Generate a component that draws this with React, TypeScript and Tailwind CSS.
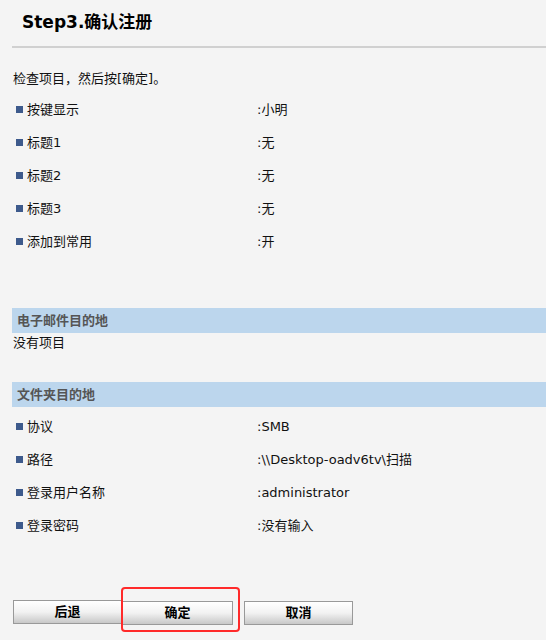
import React from "react";

const font = { fontFamily: '"DejaVu Sans", Verdana, "Noto Sans CJK SC", sans-serif' };

function Row({ label, value }: { label: string; value: string }) {
  return (
    <div className="flex h-[33px] items-center text-[13px] text-[#111]">
      <div className="flex w-[245px] items-center pl-[4px]">
        <span className="mr-[4px] inline-block h-[7px] w-[7px] bg-[#3d5a8c]" />
        <span>{label}</span>
      </div>
      <div>:{value}</div>
    </div>
  );
}

function Band({ title }: { title: string }) {
  return (
    <div className="flex h-[25px] items-center bg-[#bcd6ed] pl-[5px] text-[13px] font-bold text-[#555]">
      {title}
    </div>
  );
}

function Btn({ label, w }: { label: string; w: string }) {
  return (
    <button
      className={`h-[24px] ${w} border border-[#999] bg-gradient-to-b from-white via-[#f2f2f2] to-[#c8c8c8] text-[13px] font-bold text-black`}
    >
      {label}
    </button>
  );
}

export default function App() {
  return (
    <div className="min-h-[640px] w-[546px] bg-[#f4f4f4] pl-[12px]" style={font}>
      <div className="flex h-[46px] items-center pl-[10px] text-[17px] font-bold text-black">
        Step3.确认注册
      </div>
      <div className="h-[2px] bg-[#d0d0d0]" />
      <div className="mt-[21px] flex h-[20px] items-center pl-[1px] text-[13px] text-[#111]">
        检查项目，然后按[确定]。
      </div>
      <div className="mt-[4px]">
        <Row label="按键显示" value="小明" />
        <Row label="标题1" value="无" />
        <Row label="标题2" value="无" />
        <Row label="标题3" value="无" />
        <Row label="添加到常用" value="开" />
      </div>
      <div className="mt-[50px]">
        <Band title="电子邮件目的地" />
        <div className="flex h-[20px] items-center pl-[1px] text-[13px] text-[#111]">没有项目</div>
      </div>
      <div className="mt-[29px]">
        <Band title="文件夹目的地" />
        <div className="mt-[3px]">
          <Row label="协议" value="SMB" />
          <Row label="路径" value="\\Desktop-oadv6tv\扫描" />
          <Row label="登录用户名称" value="administrator" />
          <Row label="登录密码" value="没有输入" />
        </div>
      </div>
      <div className="mt-[58px] flex pl-[1px]">
        <Btn label="后退" w="w-[109px]" />
        <div className="relative">
          <Btn label="确定" w="w-[111px]" />
          <div className="pointer-events-none absolute left-[-1px] top-[-13px] h-[45px] w-[119px] rounded-[4px] border-2 border-[#ff2a2a]" />
        </div>
        <div className="ml-[11px]">
          <Btn label="取消" w="w-[109px]" />
        </div>
      </div>
    </div>
  );
}
